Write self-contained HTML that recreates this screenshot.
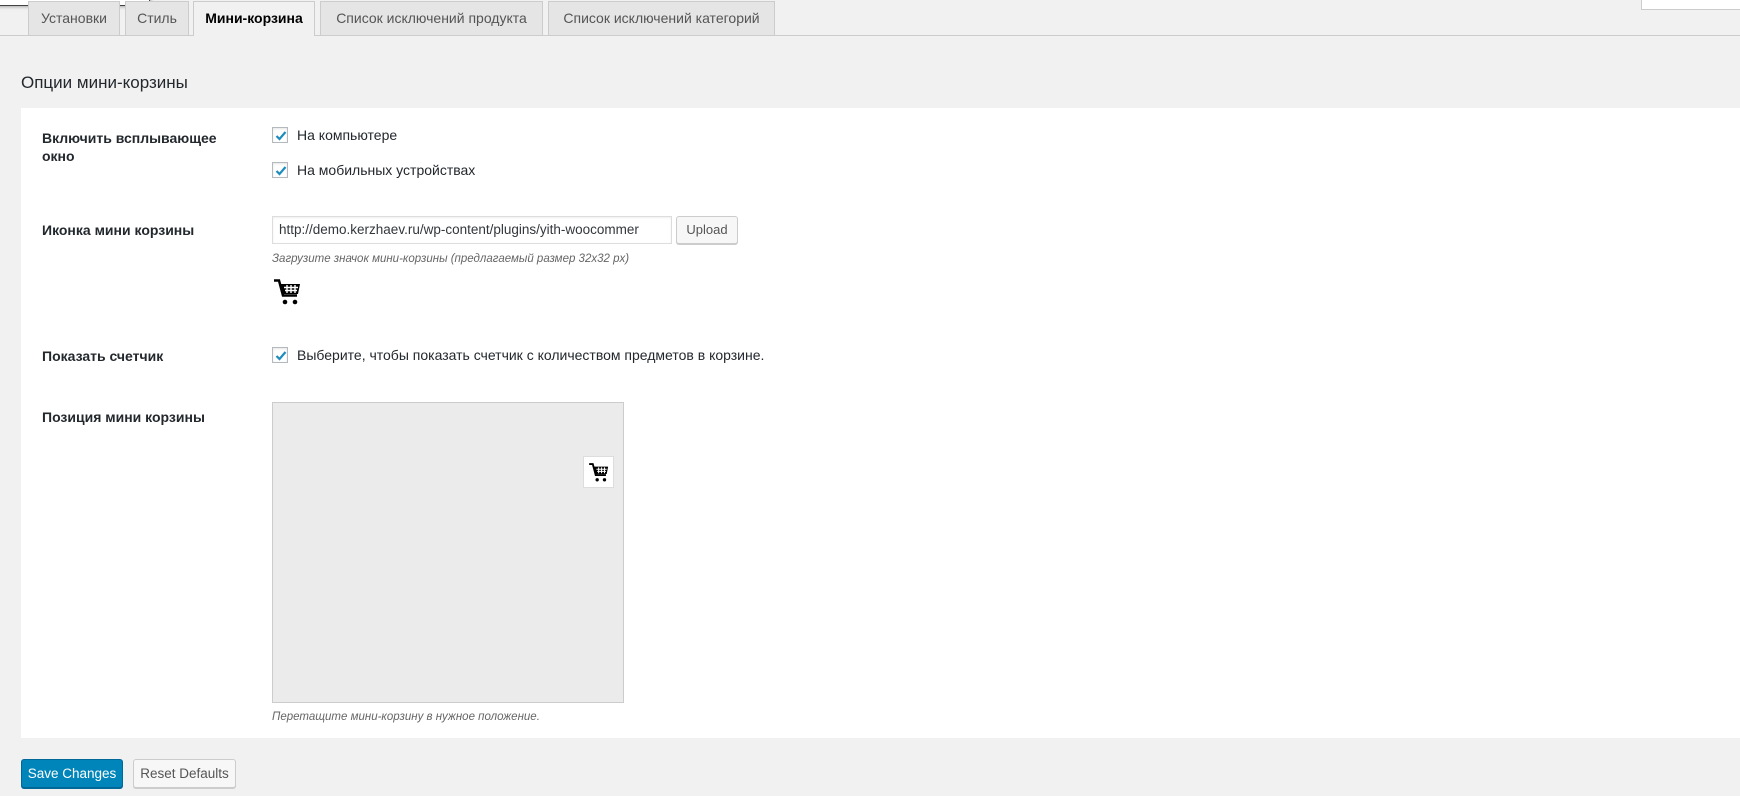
<!DOCTYPE html>
<html><head><meta charset="utf-8"><style>
*{box-sizing:border-box;margin:0;padding:0}
body{width:1740px;height:796px;background:#f1f1f1;font-family:"Liberation Sans","DejaVu Sans",sans-serif;font-size:14px;color:#23282d;position:relative;overflow:hidden}
.a{position:absolute;white-space:nowrap}
.tab{position:absolute;top:1px;height:34px;background:#e5e5e5;border:1px solid #ccc;border-bottom:none;color:#555;font-size:14px;font-weight:400;text-align:center;line-height:32px}
.tab.act{background:#f1f1f1;color:#000;height:35px;z-index:2;font-weight:600}
.cb{position:absolute;width:16px;height:16px;border:1px solid #b4b9be;background:#fff;box-shadow:inset 0 1px 2px rgba(0,0,0,.1)}
.cb svg{position:absolute;left:0;top:0}
.lbl{font-weight:600;font-size:14px;color:#23282d}
.desc{font-style:italic;font-size:11.5px;color:#666}
</style></head><body>
<div class="a" style="left:-4px;top:-14px;width:154px;height:20px;border:1.5px solid #444;background:#fff;box-shadow:1px 1px 3px rgba(0,0,0,.3)"></div>
<div class="a" style="left:1641px;top:-10px;width:110px;height:20px;border:1px solid #ccc;background:#fff"></div>
<div class="a" style="left:0;top:35px;width:1740px;height:1px;background:#ccc"></div>
<div class="tab" style="left:28px;width:92px">Установки</div>
<div class="tab" style="left:125px;width:64px">Стиль</div>
<div class="tab act" style="left:193px;width:122px">Мини-корзина</div>
<div class="tab" style="left:320px;width:223px">Список исключений продукта</div>
<div class="tab" style="left:548px;width:227px">Список исключений категорий</div>
<div class="a" style="left:21px;top:73px;font-size:17px;color:#23282d">Опции мини-корзины</div>
<div class="a" style="left:21px;top:108px;width:1719px;height:630px;background:#fff"></div>
<div class="a lbl" style="left:42px;top:129px;line-height:18px">Включить всплывающее<br>окно</div>
<div class="cb" style="left:272px;top:127px"><svg width="16" height="16"><path d="M3.5 8l3 3 6-7" stroke="#1e8cbe" stroke-width="2.2" fill="none"/></svg></div>
<div class="a" style="left:297px;top:127px">На компьютере</div>
<div class="cb" style="left:272px;top:162px"><svg width="16" height="16"><path d="M3.5 8l3 3 6-7" stroke="#1e8cbe" stroke-width="2.2" fill="none"/></svg></div>
<div class="a" style="left:297px;top:162px">На мобильных устройствах</div>
<div class="a lbl" style="left:42px;top:222px">Иконка мини корзины</div>
<div class="a" style="left:272px;top:216px;width:400px;height:28px;border:1px solid #ddd;box-shadow:inset 0 1px 2px rgba(0,0,0,.07);padding:5px 6px;overflow:hidden;color:#32373c;font-size:13.5px">http://demo.kerzhaev.ru/wp-content/plugins/yith-woocommer</div>
<div class="a" style="left:676px;top:216px;width:62px;height:28px;border:1px solid #ccc;background:#f7f7f7;border-radius:3px;box-shadow:0 1px 0 #ccc;color:#555;font-size:13px;text-align:center;line-height:26px">Upload</div>
<div class="a desc" style="left:272px;top:253px">Загрузите значок мини-корзины (предлагаемый размер 32x32 px)</div>
<svg class="a" style="left:274px;top:279px" width="27" height="26" viewBox="0 0 27 26"><path d="M0 1.5h5l4 15h14" stroke="#000" stroke-width="2.5" fill="none"/><path d="M6 5h20l-2 10H8.5z" fill="#000"/><path d="M10 8.5h14M11 11.5h12M13 6v8M17 6v8M21 6v8" stroke="#fff" stroke-width="1.4"/><circle cx="11" cy="23" r="2.3" fill="#000"/><circle cx="21" cy="23" r="2.3" fill="#000"/></svg>
<div class="a lbl" style="left:42px;top:348px">Показать счетчик</div>
<div class="cb" style="left:272px;top:347px"><svg width="16" height="16"><path d="M3.5 8l3 3 6-7" stroke="#1e8cbe" stroke-width="2.2" fill="none"/></svg></div>
<div class="a" style="left:297px;top:347px">Выберите, чтобы показать счетчик с количеством предметов в корзине.</div>
<div class="a lbl" style="left:42px;top:409px">Позиция мини корзины</div>
<div class="a" style="left:272px;top:402px;width:352px;height:301px;background:#ebebeb;border:1px solid #ccc"></div>
<div class="a" style="left:583px;top:456px;width:31px;height:32px;background:#fff;border:1px solid #ddd"></div>
<svg class="a" style="left:589px;top:463px" width="20" height="19" viewBox="0 0 27 26"><path d="M0 1.5h5l4 15h14" stroke="#000" stroke-width="2.5" fill="none"/><path d="M6 5h20l-2 10H8.5z" fill="#000"/><path d="M10 8.5h14M11 11.5h12M13 6v8M17 6v8M21 6v8" stroke="#fff" stroke-width="1.4"/><circle cx="11" cy="23" r="2.3" fill="#000"/><circle cx="21" cy="23" r="2.3" fill="#000"/></svg>
<div class="a desc" style="left:272px;top:711px">Перетащите мини-корзину в нужное положение.</div>
<div class="a" style="left:21px;top:759px;width:102px;height:29px;background:#0085ba;border:1px solid #006799;border-radius:3px;box-shadow:0 1px 0 #006799;color:#fff;font-size:13.5px;text-align:center;line-height:27px">Save Changes</div>
<div class="a" style="left:133px;top:759px;width:103px;height:29px;background:#f7f7f7;border:1px solid #ccc;border-radius:3px;box-shadow:0 1px 0 #ccc;color:#555;font-size:13.5px;text-align:center;line-height:27px">Reset Defaults</div>
</body></html>
